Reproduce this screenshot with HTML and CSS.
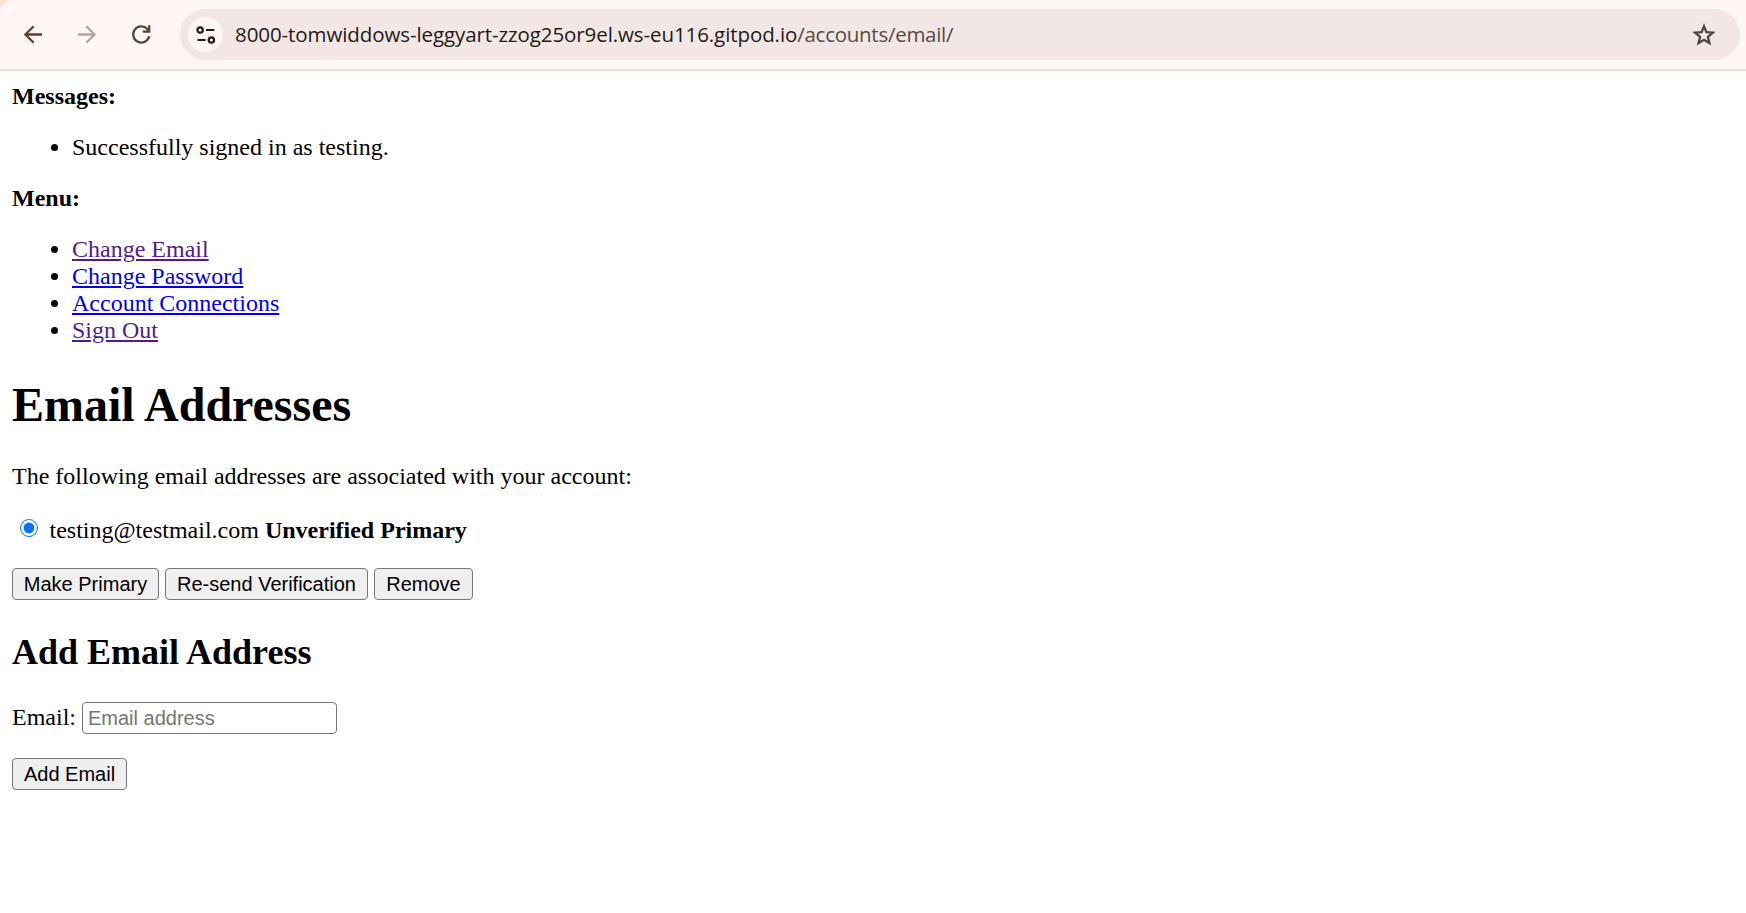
FILE: index.html
```html
<!DOCTYPE html>
<html lang="en">
<head>
<meta charset="utf-8">
<title>Email Addresses</title>
<link rel="stylesheet" href="styles.css">
</head>
<body>
<header class="toolbar">
  <nav class="nav">
    <svg class="icon" viewBox="0 0 24 24"><path d="M21 12.500H4.500M12.700 4.200L4.400 12.500L12.700 20.800" /></svg>
    <svg class="icon icon-disabled" viewBox="0 0 24 24"><path d="M3 12.500H19.500M11.300 4.200L19.600 12.500L11.300 20.800"/></svg>
    <svg class="icon" viewBox="0 0 24 24"><path d="M20.200 14.300A8.100 8.100 0 1 1 18.300 7L20 9M20.200 3.200V9.700H13.800"/></svg>
  </nav>
  <div class="address">
    <span class="site-info">
      <svg class="tune" viewBox="0 0 20 20"><circle cx="4.100" cy="5" r="2.700"/><path d="M10 5H18.300M1.500 15H9.600"/><circle cx="15.400" cy="15" r="2.700"/></svg>
    </span>
    <span class="url"><span class="host">8000-tomwiddows-leggyart-zzog25or9el.ws-eu116.gitpod.io</span><span class="path">/accounts/email/</span></span>
    <svg class="star" viewBox="0 0 24 24"><path d="M12 3.200L14.400 9.200L20.900 9.700L15.900 13.800L17.500 20.200L12 16.700L6.500 20.200L8.100 13.800L3.100 9.700L9.600 9.200Z"/></svg>
  </div>
</header>
<main class="page">
  <strong class="label">Messages:</strong>
  <ul class="list">
    <li>Successfully signed in as testing.</li>
  </ul>
  <strong class="label">Menu:</strong>
  <ul class="list">
    <li><a class="link visited" href="#">Change Email</a></li>
    <li><a class="link" href="#">Change Password</a></li>
    <li><a class="link" href="#">Account Connections</a></li>
    <li><a class="link visited" href="#">Sign Out</a></li>
  </ul>
  <h1 class="title">Email Addresses</h1>
  <p class="intro">The following email addresses are associated with your account:</p>
  <form class="form">
    <label class="choice"><input class="radio" type="radio" checked><span>testing@testmail.com <strong>Unverified</strong> <strong>Primary</strong></span></label>
    <div class="actions">
      <button class="button make" type="button">Make Primary</button>
      <button class="button resend" type="button">Re-send Verification</button>
      <button class="button remove" type="button">Remove</button>
    </div>
  </form>
  <h2 class="subtitle">Add Email Address</h2>
  <form class="form">
    <label class="field"><span class="field-name">Email:</span><input class="input" type="email" placeholder="Email address"></label>
    <button class="button add" type="button">Add Email</button>
  </form>
</main>
</body>
</html>
```
FILE: styles.css
```css
* { box-sizing: border-box; }
body {
  margin: 0;
  background: #fff;
  color: #000;
  font: 24px/27px "Liberation Serif", "Times New Roman", serif;
}
.toolbar {
  display: flex;
  align-items: flex-start;
  height: 71px;
  padding: 9px 6px 0 21px;
  border-bottom: 2px solid #f2dcd4;
  background: radial-gradient(circle at 12px 12px, #fff7f4 11.500px, #ffdccb 12.500px) 0 0 / 12px 12px no-repeat, #fff7f4;
}
.nav {
  display: flex;
  gap: 30px;
  padding-top: 13px;
  width: 159px;
}
.icon {
  flex: none;
  width: 24px;
  height: 24px;
  fill: none;
  stroke: #5b4136;
  stroke-width: 2.300;
}
.icon-disabled { stroke: #b3a6a1; }
.address {
  display: flex;
  flex: 1;
  align-items: center;
  height: 51px;
  padding: 0 24px 0 8px;
  border-radius: 26px;
  background: #f2e7e4;
}
.site-info {
  display: flex;
  align-items: center;
  justify-content: center;
  width: 35px;
  height: 35px;
  border-radius: 50%;
  background: #fff7f4;
}
.tune {
  width: 20px;
  height: 20px;
  fill: none;
  stroke: #211a18;
  stroke-width: 2.200;
}
.url {
  flex: 1;
  padding: 0 0 2px 12px;
  font: 20.500px/28px "Open Sans", "Noto Sans", sans-serif;
  white-space: nowrap;
  color: #1f1a19;
}
.host { letter-spacing: -0.090px; }
.path { color: #574a46; letter-spacing: -0.270px; }
.star {
  width: 24px;
  height: 24px;
  fill: none;
  stroke: #4e423c;
  stroke-width: 2.200;
}
.page { padding: 12px; }
.label { display: block; }
.list {
  margin: 24px 0;
  padding-left: 60px;
}
.link { color: #0000ee; }
.visited { color: #551a8b; }
.title {
  margin: 33px 0 31px;
  font-size: 48px;
  line-height: 55px;
}
.intro { margin: 0 0 27px; }
.form { margin: 0; }
.choice { display: flex; }
.radio {
  flex: none;
  width: 18px;
  height: 18px;
  margin: 2px 11.500px 0 8px;
}
.actions {
  display: flex;
  gap: 6px;
  margin-top: 24px;
}
.button {
  height: 32px;
  padding: 0;
  border: 1px solid #767676;
  border-radius: 4px;
  background: #efefef;
  color: #000;
  font: 20px/24px "Liberation Sans", Arial, sans-serif;
  white-space: nowrap;
}
.make { width: 147px; }
.resend { width: 203px; }
.remove { width: 99px; }
.subtitle {
  margin: 32px 0 29px;
  font-size: 36px;
  line-height: 41px;
}
.field {
  display: flex;
  align-items: center;
  gap: 6px;
  margin-bottom: 24px;
}
.field-name { padding-bottom: 2px; }
.input {
  width: 255px;
  height: 32px;
  padding: 1px 5px;
  border: 1px solid #767676;
  border-radius: 4px;
  background: #fff;
  font: 20px/24px "Liberation Sans", Arial, sans-serif;
}
.input::placeholder { color: #757575; }
.add { display: block; width: 115px; }
```
